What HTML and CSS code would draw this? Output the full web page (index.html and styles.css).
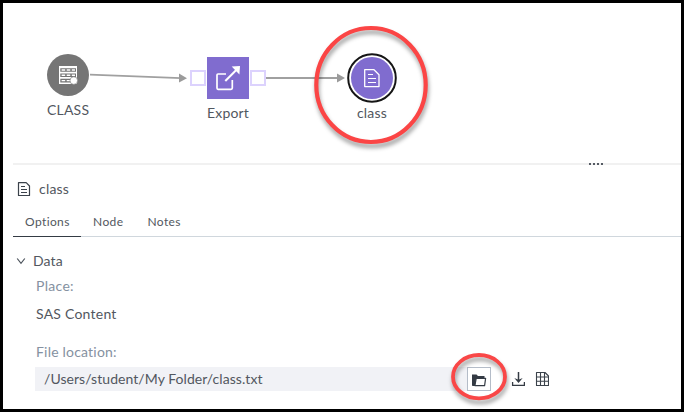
FILE: index.html
```
<!DOCTYPE html>
<html lang="en">
<head>
<meta charset="utf-8">
<title>Flow</title>
<link rel="stylesheet" href="styles.css">
</head>
<body>
<div class="app">
  <section class="canvas">
    <svg class="wires" width="678" height="160" viewBox="3 3 678 160">
      <path class="wire" d="M90 74.7L181 78.1M265 78H339"/>
      <path class="tip" d="M179 73.6L187 78.2L179 82.4ZM337 73.6L345 78L337 82.4Z"/>
    </svg>
    <div class="node node-table">
      <svg width="42" height="42" viewBox="47 54 42 42">
        <circle cx="68" cy="75" r="21" fill="#757575"/>
        <path fill="#fff" d="M59 66H77V84H59Z"/>
        <path fill="#757575" d="M60.3 68.2H76V71.8H60.3ZM60.3 73.5H76V77.1H60.3ZM60.3 78.8H76V82.4H60.3Z"/>
        <path stroke="#fff" stroke-width="1.4" stroke-dasharray="3.6 1.5" d="M61.6 70H75M61.6 75.3H75M61.6 80.6H75"/>
        <circle cx="73.8" cy="80.6" r="3.8" fill="#fff" stroke="#757575" stroke-width=".6"/>
      </svg>
      <span class="label label-caps">CLASS</span>
    </div>
    <div class="node node-export">
      <div class="ports">
        <i class="port"></i>
        <svg class="tile" width="42" height="42" viewBox="207 57 42 42" fill="none" stroke="#fff">
          <path stroke-width="1.7" d="M226 74H218Q217 74 217 75V88Q217 89.3 218 89.3H231Q232.3 89.3 232.3 88V80"/>
          <path stroke-width="2" d="M225.3 81L237 69.2"/>
          <path fill="#fff" stroke="none" d="M231.7 66.5L240 66L239.4 74.5Z"/>
        </svg>
        <i class="port"></i>
      </div>
      <span class="label label-export">Export</span>
    </div>
    <div class="node node-file">
      <svg width="50" height="50" viewBox="347 53 50 50" fill="none">
        <circle cx="372" cy="78" r="23.8" fill="#fff" stroke="#151515" stroke-width="2"/>
        <circle cx="372" cy="78" r="21" fill="#806ccf"/>
        <path stroke="#fff" stroke-width="1.3" stroke-linejoin="round" d="M364.7 69.7H374L379 74.7V86.6H364.7Z"/>
        <path stroke="#fff" stroke-width="1.2" d="M368 74.5H373M368 78.5H376M368 82.5H376"/>
      </svg>
      <span class="label label-file">class</span>
    </div>
    <svg class="ring" width="134" height="140" viewBox="304 16 134 140">
      <ellipse cx="371" cy="85" rx="54.7" ry="57" fill="none" stroke="#fb4545" stroke-width="4.2"/>
    </svg>
  </section>

  <div class="splitter"><i></i><i></i><i></i><i></i></div>

  <section class="panel">
    <header class="title">
      <svg width="14" height="16" viewBox="17 181 14 16" fill="none" stroke="#3b424b" stroke-width="1.2">
        <path stroke-linejoin="round" d="M18.5 182.6H26.2L29.5 186V195.5H18.5Z"/>
        <path d="M21 186.5H25M21 189.5H27M21 192.5H27"/>
      </svg>
      <span class="title-text">class</span>
    </header>
    <nav class="tabs">
      <span class="tab tab-active">Options</span>
      <span class="tab">Node</span>
      <span class="tab">Notes</span>
    </nav>
    <div class="group">
      <svg width="10" height="8" viewBox="0 0 10 8" fill="none" stroke="#4b525b" stroke-width="1.2"><path d="M1.2 1.5L5 6.3L8.8 1.5"/></svg>
      <span class="group-text">Data</span>
    </div>
    <div class="fields">
      <label class="caption caption-place">Place:</label>
      <div class="value">SAS Content</div>
      <label class="caption caption-file">File location:</label>
      <div class="row">
        <div class="path">/Users/student/My Folder/class.txt</div>
        <div class="browse">
          <svg class="folder" width="16" height="14" viewBox="470 373 16 14" fill="none">
            <path fill="#343b44" d="M471 374.5H475.5L477 376H483.5V378H476L474.6 386H471.7Q471 386 471 385Z"/>
            <path fill="#fff" stroke="#343b44" stroke-width="1.2" stroke-linejoin="round" d="M475.2 378.3H484.6L483.6 385.6H473.9Z"/>
          </svg>
          <svg class="ring" width="76" height="68" viewBox="441 343 76 68">
            <ellipse cx="479" cy="376.7" rx="26" ry="21.7" fill="none" stroke="#f94747" stroke-width="3.8"/>
          </svg>
        </div>
        <svg class="download" width="14" height="16" viewBox="511 371 14 16" fill="none" stroke="#343b44">
          <path stroke-width="1.5" d="M518.5 372V381"/>
          <path stroke-width="1.3" d="M512.6 382V385.3H524.4V382"/>
          <path fill="#343b44" stroke="none" d="M514.3 378L518.5 383L522.7 378L518.5 379.8Z"/>
        </svg>
        <svg class="grid-icon" width="14" height="16" viewBox="535 371 14 16" fill="none" stroke="#3b424b" stroke-width="1.1">
          <path stroke-linejoin="round" d="M536.5 372.5H545L548.5 376V385.5H536.5Z"/>
          <path d="M540.5 372.5V385.5M544.5 372.5V385.5M536.5 377H548.5M536.5 381.2H548.5"/>
        </svg>
      </div>
    </div>
  </section>
</div>
</body>
</html>
```

FILE: styles.css
```
* { box-sizing: border-box; }
body { margin: 0; }
.app {
  width: 684px;
  height: 412px;
  border: 3px solid #000;
  background: #fff;
  overflow: hidden;
  font: 14px/18px Lato, sans-serif;
  color: #525760;
}
.canvas { position: relative; height: 160px; }
.wires { display: block; }
.wire { stroke: #a0a0a0; stroke-width: 1.8; fill: none; }
.tip { fill: #9b9b9b; }
.node {
  position: absolute;
  display: flex;
  flex-direction: column;
  align-items: center;
}
.node svg { display: block; }
.node-table { left: 44px; top: 51px; }
.node-export { left: 187px; top: 54px; }
.node-file { left: 344px; top: 50px; }
.label { white-space: nowrap; }
.label-caps { margin-top: 5px; letter-spacing: .2px; }
.label-export { margin-top: 5px; letter-spacing: .15px; }
.label-file { margin-top: 1px; letter-spacing: .2px; }
.ports { display: flex; align-items: center; gap: 1px; }
.port { width: 16px; height: 16px; border: 2px solid #dcd2fd; background: #fff; }
.tile { background: #806ccf; }
.ring { position: absolute; filter: drop-shadow(1px 4px 2px rgba(0, 0, 0, .38)); }
.canvas .ring { left: 301px; top: 13px; }
.splitter {
  height: 2px;
  margin-left: 10px;
  padding-left: 576px;
  background: #f1f1f1;
  display: flex;
  gap: 2px;
}
.splitter i { width: 2px; height: 2px; background: #555b64; }
.panel { padding-left: 10px; }
.title { display: flex; align-items: center; height: 30px; margin-top: 9px; padding-left: 4px; gap: 8px; }
.title-text { letter-spacing: .2px; }
.tabs {
  display: flex;
  height: 33px;
  border-bottom: 1px solid #d0d7dd;
  font-size: 12px;
  letter-spacing: .4px;
}
.tab { padding: 9px 12px 0; height: 33px; }
.tab-active { width: 68px; border-bottom: 1px solid #343b44; }
.group { display: flex; align-items: center; gap: 7px; margin-top: 15px; padding-left: 3px; height: 18px; }
.group-text { letter-spacing: .1px; }
.fields { padding-left: 22px; }
.caption { display: block; padding-left: 1px; color: #8591a1; letter-spacing: .2px; }
.caption-place { margin-top: 7px; letter-spacing: .3px; }
.value { margin-top: 10px; padding-left: 1px; letter-spacing: .23px; }
.caption-file { margin-top: 20px; }
.row { display: flex; align-items: center; height: 24px; margin-top: 6px; }
.path { width: 432px; height: 24px; padding: 3px 9px; background: #f1f2f6; letter-spacing: .06px; }
.browse {
  position: relative;
  display: flex;
  align-items: center;
  justify-content: center;
  width: 24px;
  height: 24px;
  border: 1px solid #b4bcc8;
  background: #fff;
}
.folder { margin: 2px 1px 0 0; }
.browse .ring { left: -27px; top: -25px; }
.download { margin-left: 20px; }
.grid-icon { margin-left: 10px; }
```
